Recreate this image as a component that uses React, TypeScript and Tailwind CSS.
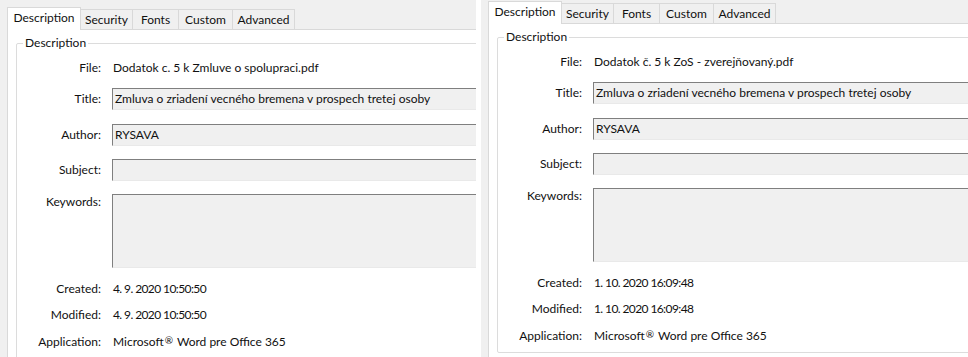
import React from 'react';

interface PanelProps {
  file: string;
  created: string;
  modified: string;
  topPad: string;
  width: string;
}

const tabs = [
  { name: 'Security', w: 'w-[52px]' },
  { name: 'Fonts', w: 'w-[46px]' },
  { name: 'Custom', w: 'w-[54px]' },
  { name: 'Advanced', w: 'w-[62px]' },
];

function Label({ children, top }: { children: React.ReactNode; top?: boolean }) {
  return (
    <div className={`w-[84px] shrink-0 text-right ${top ? 'leading-[16px]' : ''}`}>
      {children}
    </div>
  );
}

function InfoRow({ label, value, h = 'h-[26px]', tight }: { label: string; value: React.ReactNode; h?: string; tight?: boolean }) {
  return (
    <div className={`flex items-center ${h}`}>
      <Label>{label}</Label>
      <div className={`ml-[11px] pl-[1px] whitespace-nowrap ${tight ? 'tracking-[-0.6px]' : ''}`}>{value}</div>
    </div>
  );
}

function InputRow({ label, value, className }: { label: string; value?: string; className?: string }) {
  return (
    <div className={`flex items-center h-[22px] ${className ?? ''}`}>
      <Label>{label}</Label>
      <div className="ml-[11px] flex-1 h-[22px] flex items-center bg-[#f0f0f0] border-t border-l border-[#7f7f7f] border-b border-b-[#e9e9e9] pl-[2px] whitespace-nowrap">
        {value}
      </div>
    </div>
  );
}

function PropertiesPanel({ file, created, modified, topPad, width }: PanelProps) {
  return (
    <div className={`${width} h-[357px] shrink-0 overflow-hidden bg-[#f0f0f0] pl-[7px] ${topPad}`}>
      <div className="flex items-end h-[22px]">
        <div className="relative z-10 -mb-px h-[23px] w-[74px] flex items-center justify-center bg-white border border-b-0 border-[#d9d9d9] pb-[2px]">
          Description
        </div>
        {tabs.map(tab => (
          <div
            key={tab.name}
            className={`h-[20px] ${tab.w} flex items-center justify-center border-t border-r border-[#d9d9d9] bg-[#f0f0f0]`}
          >
            {tab.name}
          </div>
        ))}
      </div>

      <div className="w-[640px] h-[400px] bg-white border-t border-l border-[#d9d9d9] pl-[8px] pt-[13px]">
        <div className="relative h-[316px] border border-[#dcdcdc] rounded-[2px] pt-[13px]">
          <span className="absolute left-[6px] -top-[9px] px-[2px] leading-[16px] bg-white">Description</span>

          <InfoRow label="File:" value={file} h="h-[22px]" />
          <InputRow label="Title:" value="Zmluva o zriadení vecného bremena v prospech tretej osoby" className="mt-[9px]" />
          <InputRow label="Author:" value="RYSAVA" className="mt-[14px]" />
          <InputRow label="Subject:" className="mt-[13px]" />

          <div className="flex mt-[13px]">
            <Label top>Keywords:</Label>
            <div className="ml-[11px] flex-1 h-[74px] bg-[#f0f0f0] border-t border-l border-[#7f7f7f] border-b border-b-[#e9e9e9]" />
          </div>

          <div className="mt-[8px]">
            <InfoRow label="Created:" value={created} tight />
            <InfoRow label="Modified:" value={modified} tight />
            <InfoRow
              label="Application:"
              value={
                <>
                  Microsoft<span className="relative -top-[2px] text-[10px] mx-[1px]">®</span> Word pre Office 365
                </>
              }
              h="h-[27px]"
            />
          </div>
        </div>
      </div>
    </div>
  );
}

export default function App() {
  return (
    <div className="flex w-[968px] h-[357px] overflow-hidden bg-white text-[12px] text-[#111] font-['Lato','Liberation_Sans',sans-serif]">
      <PropertiesPanel
        width="w-[476px]"
        topPad="pt-[7px]"
        file="Dodatok c. 5 k Zmluve o spolupraci.pdf"
        created="4. 9. 2020 10:50:50"
        modified="4. 9. 2020 10:50:50"
      />
      <div className="w-[5px] shrink-0 bg-white" />
      <PropertiesPanel
        width="w-[487px]"
        topPad="pt-[1px]"
        file="Dodatok č. 5 k ZoS - zverejňovaný.pdf"
        created="1. 10. 2020 16:09:48"
        modified="1. 10. 2020 16:09:48"
      />
    </div>
  );
}
